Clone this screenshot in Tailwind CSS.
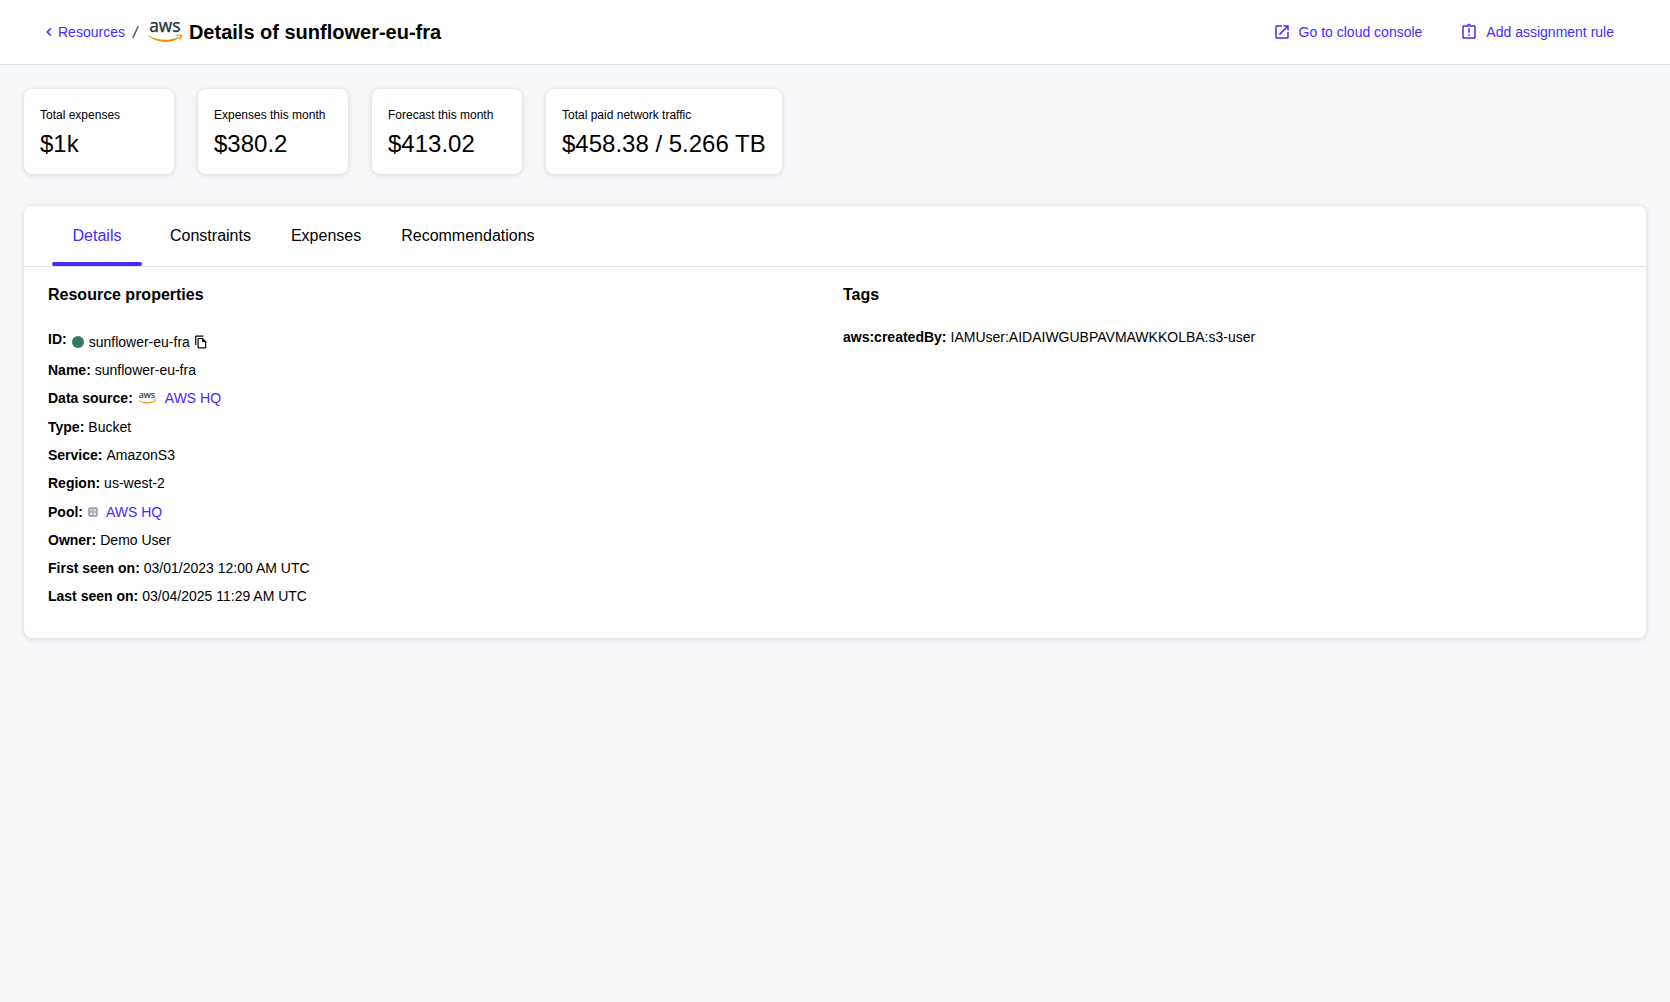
<!DOCTYPE html>
<html lang="en">
<head>
<meta charset="utf-8">
<title>Details of sunflower-eu-fra</title>
<script src="https://cdn.jsdelivr.net/npm/@tailwindcss/browser@4"></script>
</head>
<body class="min-h-screen bg-[#f5f7f9] font-['Liberation_Sans',Arial,sans-serif] text-sm leading-5 text-black">
<svg class="hidden">
  <symbol id="aws" viewBox="0 0 34 21">
    <text x="1.2" y="10.4" textLength="31.4" lengthAdjust="spacingAndGlyphs" font-family="Open Sans, sans-serif" font-size="18.500" font-weight="500" fill="#252f3e" stroke="#252f3e" stroke-width=".35">aws</text>
    <path d="M0.6 13.500C9.500 18.600 21 19.100 30.500 14.900c.9-.4 1.500.6.7 1.200C22 22.100 9 21.100.3 14.100c-.5-.4-.2-.9.300-.6z" fill="#f29100"/>
    <path d="M27.700 13.600c2.200-1.500 5.600-1.200 6-.7.400.5-.1 4-2.100 5.600-.3.300-.6.100-.5-.2.500-1.200 1.500-3.600 1-4.200-.5-.6-3-.3-4.100-.1-.4 0-.5-.200-.3-.4z" fill="#f29100"/>
  </symbol>
</svg>

<header class="flex h-[65px] items-center justify-between border-b border-[#dce2e4] bg-white pr-14 pl-10">
  <nav class="flex items-center">
    <a class="flex items-center text-[#472aff]">
      <svg class="mr-px ml-px size-4" viewBox="0 0 24 24" fill="currentColor" stroke="currentColor" stroke-width=".4"><path d="M15.410 7.410 14 6l-6 6 6 6 1.410-1.410L10.830 12z"/></svg>
      <span>Resources</span>
    </a>
    <svg class="ml-[7px] h-4 w-[7px]" viewBox="0 0 7 16"><path d="M6.200 2.300.9 14" stroke="#4d5a79" stroke-width="1.500" fill="none"/></svg>
    <svg class="ml-[9px] h-[21px] w-[34px]"><use href="#aws"/></svg>
    <h1 class="ml-[7px] text-xl font-bold">Details of sunflower-eu-fra</h1>
  </nav>
  <div class="flex items-center gap-[38px] text-[#472aff]">
    <a class="flex items-center gap-2">
      <svg class="size-[18px]" viewBox="0 0 24 24" fill="currentColor"><path d="M19 19H5V5h7V3H5c-1.110 0-2 .9-2 2v14c0 1.100.890 2 2 2h14c1.100 0 2-.9 2-2v-7h-2v7zM14 3v2h3.590l-9.830 9.830 1.410 1.410L19 6.410V10h2V3h-7z"/></svg>
      <span>Go to cloud console</span>
    </a>
    <a class="flex items-center gap-2">
      <svg class="size-[18px]" viewBox="0 0 24 24" fill="currentColor"><path d="M11 15h2v2h-2zM11 7h2v6h-2z"/><path d="M19 3h-4.180C14.400 1.840 13.300 1 12 1s-2.400.840-2.820 2H5c-1.100 0-2 .9-2 2v14c0 1.100.9 2 2 2h14c1.100 0 2-.9 2-2V5c0-1.100-.9-2-2-2zm-7-.25c.410 0 .75.340.75.75s-.340.75-.75.75-.75-.340-.75-.75.340-.75.750-.75zM19 19H5V5h14v14z"/></svg>
      <span>Add assignment rule</span>
    </a>
  </div>
</header>

<main class="px-6 pt-6">
  <section class="flex gap-6">
    <div class="h-[85px] min-w-[150px] rounded-lg bg-white px-4 pt-4 shadow-[0_1px_5px_rgba(30,40,70,0.16)]">
      <div class="text-xs leading-5">Total expenses</div>
      <div class="mt-[3px] text-2xl leading-8">$1k</div>
    </div>
    <div class="h-[85px] min-w-[150px] rounded-lg bg-white px-4 pt-4 shadow-[0_1px_5px_rgba(30,40,70,0.16)]">
      <div class="text-xs leading-5">Expenses this month</div>
      <div class="mt-[3px] text-2xl leading-8">$380.2</div>
    </div>
    <div class="h-[85px] min-w-[150px] rounded-lg bg-white px-4 pt-4 shadow-[0_1px_5px_rgba(30,40,70,0.16)]">
      <div class="text-xs leading-5">Forecast this month</div>
      <div class="mt-[3px] text-2xl leading-8">$413.02</div>
    </div>
    <div class="h-[85px] min-w-[150px] rounded-lg bg-white px-4 pt-4 shadow-[0_1px_5px_rgba(30,40,70,0.16)]">
      <div class="text-xs leading-5">Total paid network traffic</div>
      <div class="mt-[3px] text-2xl leading-8">$458.38 / 5.266 TB</div>
    </div>
  </section>

  <section class="mt-8 h-[432px] rounded-lg bg-white shadow-[0_1px_5px_rgba(30,40,70,0.16)]">
    <div class="flex h-[61px] gap-2 border-b border-[#dce2e4] pl-7 text-base">
      <div class="mr-1 flex w-[90px] flex-col items-center justify-between pt-[18px] text-[#472aff]">
        <span class="leading-6">Details</span>
        <span class="h-1 w-full rounded-sm bg-[#472aff]"></span>
      </div>
      <div class="px-4 pt-[18px]">Constraints</div>
      <div class="px-4 pt-[18px]">Expenses</div>
      <div class="px-4 pt-[18px]">Recommendations</div>
    </div>
    <div class="grid grid-cols-[795px_1fr] pt-4 pl-6">
      <div>
        <h2 class="text-base font-bold">Resource properties</h2>
        <dl class="mt-[22px] flex flex-col gap-2">
          <div class="flex h-[23px] gap-1"><dt class="font-bold">ID:</dt><dd class="flex h-[26px] items-center"><span class="mr-[5px] ml-px size-3 rounded-full bg-[#347a60]"></span>sunflower-eu-fra<svg class="ml-1 size-3.5" viewBox="0 0 24 24" fill="currentColor"><path d="M16 1H4c-1.100 0-2 .9-2 2v14h2V3h12V1zm-1 4H8c-1.100 0-1.990.9-1.990 2L6 21c0 1.100.890 2 1.990 2H19c1.100 0 2-.9 2-2V11l-6-6zM8 21V7h6v5h5v9H8z"/></svg></dd></div>
          <div class="flex gap-1"><dt class="font-bold">Name:</dt><dd>sunflower-eu-fra</dd></div>
          <div class="flex h-[21px] gap-1"><dt class="font-bold">Data source:</dt><dd class="flex h-5 items-center text-[#472aff]"><svg class="mr-[9px] ml-px h-[11px] w-[18px]"><use href="#aws"/></svg>AWS HQ</dd></div>
          <div class="flex gap-1"><dt class="font-bold">Type:</dt><dd>Bucket</dd></div>
          <div class="flex gap-1"><dt class="font-bold">Service:</dt><dd>AmazonS3</dd></div>
          <div class="flex h-[21px] gap-1"><dt class="font-bold">Region:</dt><dd>us-west-2</dd></div>
          <div class="flex gap-1"><dt class="font-bold">Pool:</dt><dd class="flex h-5 items-center text-[#472aff]"><svg class="mr-[7px] size-3" viewBox="0 0 24 24"><rect x="3.500" y="3.500" width="17" height="17" rx="1.500" fill="#a6adbc" stroke="#949cae" stroke-width="2"/><path d="M6 8h5M13.500 6.500l4 4M17.500 6.500l-4 4M6 15.500h5M8.500 13v5M13.500 14.300h4.500M13.500 17h4.500" stroke="#fff" stroke-width="1.700"/></svg>AWS HQ</dd></div>
          <div class="flex gap-1"><dt class="font-bold">Owner:</dt><dd>Demo User</dd></div>
          <div class="flex gap-1"><dt class="font-bold">First seen on:</dt><dd>03/01/2023 12:00 AM UTC</dd></div>
          <div class="flex gap-1"><dt class="font-bold">Last seen on:</dt><dd>03/04/2025 11:29 AM UTC</dd></div>
        </dl>
      </div>
      <div>
        <h2 class="text-base font-bold">Tags</h2>
        <dl class="mt-5 flex gap-1"><dt class="font-bold">aws:createdBy:</dt><dd>IAMUser:AIDAIWGUBPAVMAWKKOLBA:s3-user</dd></dl>
      </div>
    </div>
  </section>
</main>
</body>
</html>
